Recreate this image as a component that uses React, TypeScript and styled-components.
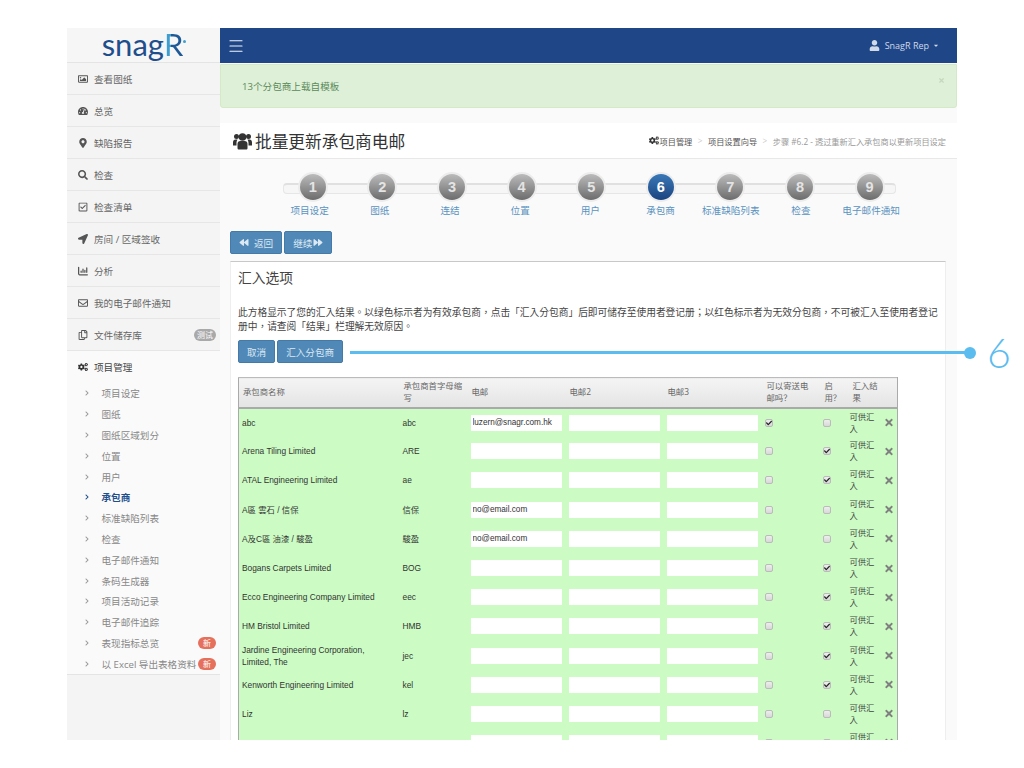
import { createGlobalStyle } from "styled-components";
import styled from "styled-components";
import { Menu } from "lucide-react";
import {
  FaBackward, FaCaretDown, FaCheck, FaChevronRight, FaCogs, FaForward, FaLocationArrow, FaMapMarkerAlt,
  FaRegCheckSquare, FaRegCopy, FaRegEnvelope, FaRegImage, FaSearch, FaTachometerAlt, FaTimes, FaUser,
} from "react-icons/fa";
import { FaChartColumn } from "react-icons/fa6";

const CJK = `"Open Sans", "Noto Sans CJK SC", sans-serif`;
const ARIAL = `"Liberation Sans", "Noto Sans CJK TC", sans-serif`;

const GlobalStyle = createGlobalStyle`
    * { box-sizing: border-box; }
    html, body { margin: 0; padding: 0; background: #fff; }
    body { font-family: ${CJK}; font-size: 9.6px; color: #555; }
`;

const Page = styled.div`
    position: relative;
    width: 1024px;
    height: 768px;
    padding: 28px 67px;
    overflow: hidden;
`;

const Frame = styled.div`
    display: flex;
    width: 890px;
    height: 712px;
    overflow: hidden;
    background: #fafafa;
`;

const Sidebar = styled.aside`
    flex: 0 0 153px;
    background: #f4f4f4;
`;

const Logo = styled.div`
    height: 35px;
    display: flex;
    align-items: center;
    justify-content: center;
    padding: 0 2px 3px 0;
    background: #f6f6f6;
    border-bottom: 1px solid #e4e4e4;
    font-family: "Lato", sans-serif;
    font-size: 31px;
    line-height: 30px;
    color: #1f4e8c;
`;

const LogoR = styled.b`
    position: relative;
    font-weight: 400;
    color: transparent;
    background: linear-gradient(90deg, #3f9ed0 36%, #1f5a96 36%);
    -webkit-background-clip: text;
    background-clip: text;
    &::after {
        content: "";
        position: absolute;
        top: 11px;
        right: -3px;
        width: 3px;
        height: 3px;
        border-radius: 50%;
        background: #3f9ed0;
    }
`;

const NavRow = styled.div<{ $open?: boolean }>`
    height: 32px;
    display: flex;
    align-items: center;
    padding: 0 3px 0 11px;
    border-bottom: 1px solid #e6e6e6;
    background: ${p => (p.$open ? "#fafafa" : "#f4f4f4")};
    color: ${p => (p.$open ? "#444" : "#666")};
    svg { flex: 0 0 10px; width: 10px; height: 10px; margin-right: 6px; color: ${p => (p.$open ? "#333" : "#555")}; }
`;

const OpenRow = styled(NavRow)`
    border-bottom: 0;
`;

const Grow = styled.span`
    flex: 1;
`;

const Pill = styled.span<{ $red?: boolean }>`
    height: 12px;
    min-width: 18px;
    margin-right: 1px;
    padding: 0 3px;
    border-radius: 6px;
    font-size: 8px;
    line-height: 12px;
    text-align: center;
    color: #fff;
    background: ${p => (p.$red ? "#e5705c" : "#a9a9a9")};
`;

const SubList = styled.div`
    background: #fafafa;
    border-bottom: 1px solid #e4e4e4;
`;

const SubRow = styled.div<{ $active?: boolean }>`
    height: 20.8px;
    display: flex;
    align-items: center;
    padding: 0 3px 0 18px;
    color: ${p => (p.$active ? "#1f4e8c" : "#888")};
    font-weight: ${p => (p.$active ? 700 : 400)};
    svg { flex: 0 0 4px; width: 4px; height: 6px; margin-right: 12.5px; color: ${p => (p.$active ? "#1f4e8c" : "#999")}; }
`;

const Main = styled.main`
    flex: 1;
    min-width: 0;
    display: flex;
    flex-direction: column;
`;

const Navbar = styled.header`
    flex: 0 0 35px;
    display: flex;
    align-items: center;
    justify-content: space-between;
    padding: 0 18px 0 7px;
    background: #1f4788;
    color: #cfd9e8;
    font-size: 9px;
`;

const Burger = styled.div`
    display: flex;
    color: #f2f5fa;
    svg { width: 18px; height: 18px; }
`;

const UserMenu = styled.div`
    display: flex;
    align-items: center;
    gap: 4px;
    svg:first-child { width: 11px; height: 11px; margin-right: 1px; }
    svg:last-child { width: 6px; height: 7px; }
`;

const Alert = styled.div`
    flex: 0 0 44px;
    display: flex;
    align-items: center;
    justify-content: space-between;
    margin-top: 1px;
    padding: 0 11px 0 21px;
    background: #dff0d8;
    border: 1px solid #d6e9c6;
    border-radius: 0 0 3px 3px;
    color: #5b8a5b;
    svg { width: 7px; height: 7px; margin-bottom: 12px; color: #c6d8bd; }
`;

const TitleBar = styled.div`
    flex: 0 0 36px;
    display: flex;
    align-items: center;
    justify-content: space-between;
    margin-top: 15px;
    padding: 0 11px 0 13px;
    background: #fff;
    border-bottom: 1px solid #e8e8e8;
`;

const Title = styled.h1`
    display: flex;
    align-items: center;
    gap: 3px;
    margin: 0;
    font-size: 16.7px;
    font-weight: 400;
    color: #333;
    svg { width: 19px; height: 18px; }
`;

const Crumbs = styled.div`
    display: flex;
    align-items: center;
    font-size: 8.2px;
    color: #555;
    svg { width: 10px; height: 9px; margin-right: 1px; color: #333; }
    i { margin: 0 5.5px; font-style: normal; color: #ccc; }
    span:last-child { color: #999; }
`;

const Wizard = styled.div`
    position: relative;
    display: grid;
    grid-template-columns: repeat(9, 69.6px);
    width: 626.4px;
    margin: 13px 0 0 58px;
    &::before {
        content: "";
        position: absolute;
        top: 11px;
        left: 5px;
        width: 611px;
        height: 8px;
        border: 1px solid #e6e6e6;
        border-top: 2px solid #e0e0e0;
        border-radius: 4px;
        background: #f6f6f6;
    }
`;

const Step = styled.div`
    position: relative;
    display: flex;
    flex-direction: column;
    align-items: center;
`;

const StepLabel = styled.span<{ $shift: number }>`
    color: #5b93c0;
    white-space: nowrap;
    transform: translateX(${p => p.$shift}px);
`;

const Bullet = styled.div<{ $active?: boolean }>`
    width: 26px;
    height: 26px;
    margin: 2px 0 3px;
    border-radius: 50%;
    box-shadow: 0 0 0 2px #ececec;
    background: ${p => (p.$active ? "linear-gradient(#3a78b8, #1b447f)" : "linear-gradient(#bbb, #6c6c6c)")};
    font-family: ${ARIAL};
    font-size: 14.5px;
    font-weight: 700;
    line-height: 26px;
    text-align: center;
    color: ${p => (p.$active ? "#fff" : "#e4e4e4")};
`;

const ButtonRow = styled.div<{ $inPanel?: boolean }>`
    display: flex;
    gap: 2px;
    margin: ${p => (p.$inPanel ? "6px 0 14px" : "14px 0 7px 10px")};
`;

const Button = styled.button<{ $gap?: number }>`
    display: flex;
    align-items: center;
    gap: ${p => p.$gap ?? 0}px;
    height: 23px;
    padding: 0 8px;
    border: 1px solid #437aa8;
    border-radius: 2px;
    background: #5088b8;
    color: #dce8f2;
    font-family: ${CJK};
    font-size: 9.6px;
    svg { width: 10px; height: 9px; }
`;

const Panel = styled.section`
    margin: 0 11px 0 10px;
    padding: 7px 7px 0;
    background: #fff;
    border-top: 1px solid #c8c8c8;
    border-right: 1px solid #eee;
    border-left: 1px solid #eee;
`;

const PanelTitle = styled.h2`
    margin: 0 0 19px;
    font-size: 13.75px;
    font-weight: 400;
    line-height: 18px;
    color: #444;
`;

const Intro = styled.p`
    margin: 0;
    font-family: "Open Sans", "Noto Sans CJK TC", sans-serif;
    font-size: 9.72px;
    line-height: 14px;
    color: #444;
`;

const ImportTable = styled.table`
    width: 659px;
    table-layout: fixed;
    border-collapse: collapse;
    border: 1px solid #aaa;
    border-top-color: #bbb;
`;

const HeadCell = styled.th<{ $w: number }>`
    width: ${p => p.$w}px;
    height: 30px;
    padding: 0 2px 0 4px;
    border-bottom: 2px solid #aaa;
    background: linear-gradient(#f4f4f4, #e4e4e4);
    font-size: 8.4px;
    font-weight: 400;
    line-height: 12px;
    text-align: left;
    white-space: pre-line;
    color: #666;
`;

const Row = styled.tr`
    height: 29.2px;
    background: #ccfcc4;
`;

const Cell = styled.td`
    padding: 0 3px;
    font-family: ${ARIAL};
    font-size: 8.35px;
    line-height: 12px;
    color: #333;
`;

const NameCell = styled(Cell)`
    padding-right: 20px;
`;

const ResultCell = styled(Cell)`
    padding: 0 0 0 1px;
    font-size: 8.3px;
    color: #444;
`;

const EmailInput = styled.input`
    display: block;
    width: 91px;
    height: 16px;
    padding: 0 2px;
    border: 0;
    background: #fff;
    font-family: ${ARIAL};
    font-size: 8.2px;
    color: #333;
`;

const Check = styled.span`
    display: flex;
    align-items: center;
    justify-content: center;
    width: 8px;
    height: 8px;
    margin-left: -1px;
    border: 1px solid #bbb;
    border-radius: 2px;
    background: linear-gradient(#eee, #d8d8d8);
    color: #222;
    svg { width: 6px; height: 6px; }
`;

const Remove = styled.div`
    display: flex;
    margin-left: -1px;
    color: #808080;
    svg { width: 10px; height: 11px; }
`;

const Callout = styled.div`
    position: absolute;
    top: 351px;
    left: 350px;
    width: 622px;
    height: 3px;
    background: #5bbcf0;
    &::after {
        content: "";
        position: absolute;
        top: -4.5px;
        right: -4px;
        width: 12px;
        height: 12px;
        border-radius: 50%;
        background: #5bbcf0;
    }
`;

const CalloutNumber = styled.div`
    position: absolute;
    top: 329px;
    left: 987px;
    font-family: "Lato", sans-serif;
    font-size: 41px;
    font-weight: 300;
    line-height: 48px;
    color: #5bbcf0;
`;

// font awesome 4 people icon, taller than the one in the packages
const UsersIcon = () => (
  <svg viewBox="0 0 38 36" fill="currentColor">
    <circle cx="7" cy="9" r="5" />
    <circle cx="31" cy="9" r="5" />
    <circle cx="19" cy="10" r="7.5" />
    <path d="M0 27v-6c0-4 2-6 5-6h4c-1 2-2 4-2 7v5H2c-1 0-2 0-2 0z" />
    <path d="M38 27v-6c0-4-2-6-5-6h-4c1 2 2 4 2 7v5h5c1 0 2 0 2 0z" />
    <path d="M9 32V24c0-4 2-6 6-6h8c4 0 6 2 6 6v8c0 2-1 3-3 3H12c-2 0-3-1-3-3z" />
  </svg>
);

const topNav = [
  { icon: <FaRegImage />, label: "查看图纸" },
  { icon: <FaTachometerAlt />, label: "总览" },
  { icon: <FaMapMarkerAlt />, label: "缺陷报告" },
  { icon: <FaSearch />, label: "检查" },
  { icon: <FaRegCheckSquare />, label: "检查清单" },
  { icon: <FaLocationArrow />, label: "房间 / 区域签收" },
  { icon: <FaChartColumn />, label: "分析" },
  { icon: <FaRegEnvelope />, label: "我的电子邮件通知" },
];

const subNav = [
  "项目设定", "图纸", "图纸区域划分", "位置", "用户", "承包商", "标准缺陷列表", "检查",
  "电子邮件通知", "条码生成器", "项目活动记录", "电子邮件追踪", "表现指标总览", "以 Excel 导出表格资料",
];

const steps = ["项目设定", "图纸", "连结", "位置", "用户", "承包商", "标准缺陷列表", "检查", "电子邮件通知"];

const columns: [string, number][] = [
  ["承包商名称", 161], ["承包商首字母缩\n写", 68], ["电邮", 98], ["电邮2", 98], ["电邮3", 99],
  ["可以寄送电\n邮吗\uFF1F", 58], ["启\n用\uFF1F", 28], ["汇入结\n果", 33], ["", 16],
];

const rows = [
  { name: "abc", code: "abc", email: "luzern@snagr.com.hk", send: true, on: false },
  { name: "Arena Tiling Limited", code: "ARE", email: "", send: false, on: true },
  { name: "ATAL Engineering Limited", code: "ae", email: "", send: false, on: true },
  { name: "A區 雲石 / 信保", code: "信保", email: "no@email.com", send: false, on: false },
  { name: "A及C區 油漆 / 駿盈", code: "駿盈", email: "no@email.com", send: false, on: false },
  { name: "Bogans Carpets Limited", code: "BOG", email: "", send: false, on: true },
  { name: "Ecco Engineering Company Limited", code: "eec", email: "", send: false, on: true },
  { name: "HM Bristol Limited", code: "HMB", email: "", send: false, on: true },
  { name: "Jardine Engineering Corporation, Limited, The", code: "jec", email: "", send: false, on: true },
  { name: "Kenworth Engineering Limited", code: "kel", email: "", send: false, on: true },
  { name: "Liz", code: "lz", email: "", send: false, on: false },
  { name: "", code: "", email: "", send: false, on: false },
];

const introText =
  "此方格显示了您的汇入结果。以绿色标示者为有效承包商\uFF0C点击「汇入分包商」后即可储存至使用者登记册\uFF1B以红色标示者为无效分包商\uFF0C不可被汇入至使用者登记册中\uFF0C请查阅「结果」栏理解无效原因。";

const App = () => {
  return (
    <Page>
      <GlobalStyle />
      <Frame>
        <Sidebar>
          <Logo>snag<LogoR>R</LogoR></Logo>
          {topNav.map(item => (
            <NavRow key={item.label}>{item.icon}{item.label}</NavRow>
          ))}
          <NavRow>
            <FaRegCopy /><Grow>文件储存库</Grow><Pill>测试</Pill>
          </NavRow>
          <OpenRow $open><FaCogs />项目管理</OpenRow>
          <SubList>
            {subNav.map((label, i) => (
              <SubRow key={label + i} $active={label === "承包商"}>
                <FaChevronRight /><Grow>{label}</Grow>{i > 11 && <Pill $red>新</Pill>}
              </SubRow>
            ))}
          </SubList>
        </Sidebar>
        <Main>
          <Navbar>
            <Burger><Menu strokeWidth={1.6} /></Burger>
            <UserMenu><FaUser />SnagR Rep<FaCaretDown /></UserMenu>
          </Navbar>
          <Alert>13个分包商上载自模板<FaTimes /></Alert>
          <TitleBar>
            <Title><UsersIcon />批量更新承包商电邮</Title>
            <Crumbs>
              <FaCogs /><span>项目管理</span><i>&gt;</i><span>项目设置向导</span><i>&gt;</i>
              <span>步骤 #6.2 - 透过重新汇入承包商以更新项目设定</span>
            </Crumbs>
          </TitleBar>
          <Wizard>
            {steps.map((label, i) => (
              <Step key={label + i}>
                <Bullet $active={i === 5}>{i + 1}</Bullet>
                <StepLabel $shift={(i - 7) * 0.6 + 1}>{label}</StepLabel>
              </Step>
            ))}
          </Wizard>
          <ButtonRow>
            <Button $gap={5}><FaBackward />返回</Button>
            <Button $gap={1}>继续<FaForward /></Button>
          </ButtonRow>
          <Panel>
            <PanelTitle>汇入选项</PanelTitle>
            <Intro>{introText}</Intro>
            <ButtonRow $inPanel>
              <Button>取消</Button>
              <Button>汇入分包商</Button>
            </ButtonRow>
            <ImportTable>
              <thead>
                <tr>
                  {columns.map(([label, w]) => (
                    <HeadCell key={label} $w={w}>{label}</HeadCell>
                  ))}
                </tr>
              </thead>
              <tbody>
                {rows.map((row, i) => (
                  <Row key={i}>
                    <NameCell>{row.name}</NameCell>
                    <Cell>{row.code}</Cell>
                    <Cell><EmailInput readOnly value={row.email} /></Cell>
                    <Cell><EmailInput readOnly value="" /></Cell>
                    <Cell><EmailInput readOnly value="" /></Cell>
                    <Cell><Check>{row.send && <FaCheck />}</Check></Cell>
                    <Cell><Check>{row.on && <FaCheck />}</Check></Cell>
                    <ResultCell>可供汇入</ResultCell>
                    <Cell><Remove><FaTimes /></Remove></Cell>
                  </Row>
                ))}
              </tbody>
            </ImportTable>
          </Panel>
        </Main>
      </Frame>
      <Callout />
      <CalloutNumber>6</CalloutNumber>
    </Page>
  );
};

export default App;
